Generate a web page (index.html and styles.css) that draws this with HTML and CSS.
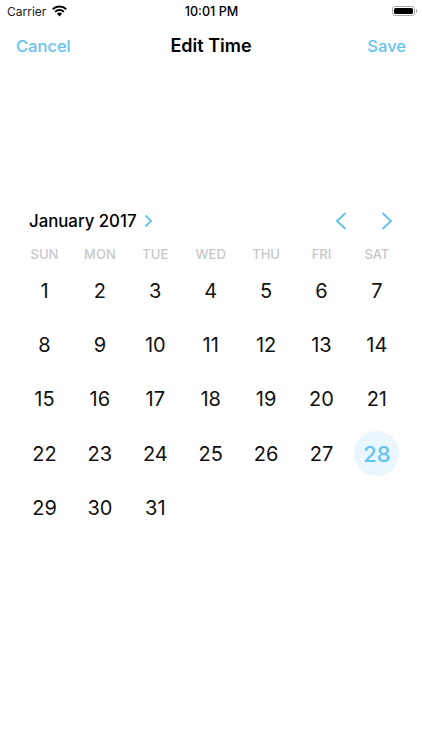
FILE: index.html
```html
<!DOCTYPE html>
<html lang="en">
<head>
  <meta charset="UTF-8">
  <meta name="viewport" content="width=device-width, initial-scale=1.0">
  <title>Edit Time</title>
  <link rel="stylesheet" href="styles.css">
</head>
<body>
  <div class="status-bar">
    <div class="status-left">
      <span>Carrier</span>
      <svg class="wifi" width="15" height="12" viewBox="0 0 16 12">
        <path d="M8 11.8 5.300 8.900a3.800 3.800 0 0 1 5.400 0z" fill="#000"/>
        <path d="M3.300 6.900a6.800 6.800 0 0 1 9.400 0" fill="none" stroke="#000" stroke-width="2.100"/>
        <path d="M.8 4.200a10.400 10.400 0 0 1 14.400 0" fill="none" stroke="#000" stroke-width="2.100"/>
      </svg>
    </div>
    <span class="status-time">10:01 PM</span>
    <div class="battery"><div class="battery-fill"></div></div>
  </div>

  <div class="nav">
    <span class="nav-btn">Cancel</span>
    <span class="nav-title">Edit Time</span>
    <span class="nav-btn nav-save">Save</span>
  </div>

  <div class="calendar">
    <div class="cal-head">
      <div class="cal-month">
        <span>January 2017</span>
        <svg width="9" height="14" viewBox="0 0 9 14"><path d="M1.5 1.5 7 7l-5.500 5.500" fill="none" stroke="#5ec2f2" stroke-width="1.800"/></svg>
      </div>
      <div class="cal-arrows">
        <svg width="12" height="18" viewBox="0 0 12 18"><path d="M10.500 1 2 9l8.500 8" fill="none" stroke="#5ec2f2" stroke-width="1.800"/></svg>
        <svg width="12" height="18" viewBox="0 0 12 18"><path d="M1.500 1 10 9l-8.500 8" fill="none" stroke="#5ec2f2" stroke-width="1.800"/></svg>
      </div>
    </div>

    <div class="weekdays">
      <span>SUN</span><span>MON</span><span>TUE</span><span>WED</span><span>THU</span><span>FRI</span><span>SAT</span>
    </div>

    <div class="days">
      <span>1</span><span>2</span><span>3</span><span>4</span><span>5</span><span>6</span><span>7</span>
      <span>8</span><span>9</span><span>10</span><span>11</span><span>12</span><span>13</span><span>14</span>
      <span>15</span><span>16</span><span>17</span><span>18</span><span>19</span><span>20</span><span>21</span>
      <span>22</span><span>23</span><span>24</span><span>25</span><span>26</span><span>27</span><span class="selected">28</span>
      <span>29</span><span>30</span><span>31</span>
    </div>
  </div>
</body>
</html>
```

FILE: styles.css
```css
* {
  box-sizing: border-box;
  margin: 0;
  padding: 0;
}

html, body {
  height: 100%;
  background: #fff;
  font-family: 'Inter', 'Liberation Sans', sans-serif;
  color: #000;
}

.status-bar {
  display: grid;
  grid-template-columns: 1fr auto 1fr;
  align-items: center;
  height: 22px;
  padding: 0 6px 0 7px;
  font-size: 12px;
}

.status-left {
  display: flex;
  align-items: center;
  gap: 6px;
  color: #222;
}

.status-time {
  font-size: 12.600px;
  font-weight: 500;
}

.battery {
  position: relative;
  justify-self: end;
  width: 23px;
  height: 10px;
  margin-right: 1px;
  padding: 1px;
  border: 1px solid #aaa;
  border-radius: 3px;
}

.battery::after {
  content: "";
  position: absolute;
  top: 2px;
  right: -3px;
  width: 1.500px;
  height: 4px;
  background: #aaa;
  border-radius: 0 1px 1px 0;
}

.battery-fill {
  height: 100%;
  background: #000;
  border-radius: 1.500px;
}

.nav {
  display: grid;
  grid-template-columns: 1fr auto 1fr;
  align-items: center;
  height: 47px;
  padding: 0 16px;
}

.nav-btn {
  font-size: 16.500px;
  font-weight: 500;
  color: #66c4f4;
}

.nav-save {
  justify-self: end;
}

.nav-title {
  font-size: 18px;
  font-weight: 600;
}

.calendar {
  margin-top: 138px;
}

.cal-head {
  display: flex;
  justify-content: space-between;
  align-items: center;
  height: 28px;
  padding: 0 29px;
}

.cal-month {
  display: flex;
  align-items: center;
  gap: 7px;
  font-size: 16.800px;
  font-weight: 500;
}

.cal-arrows {
  display: flex;
  gap: 34px;
}

.weekdays, .days {
  display: grid;
  grid-template-columns: repeat(7, 45px);
  column-gap: 10.400px;
  padding: 0 22px;
  justify-items: center;
}

.weekdays {
  margin-top: 11px;
  font-size: 13px;
  font-weight: 500;
  color: #c8c8ca;
  height: 16px;
  align-items: center;
}

.days {
  margin-top: 6px;
  row-gap: 9.400px;
  font-size: 20px;
  color: #111;
}

.days span {
  width: 45px;
  height: 45px;
  display: flex;
  align-items: center;
  justify-content: center;
}

.days .selected {
  background: #e9f6fe;
  border-radius: 50%;
  color: #66c4f4;
  font-size: 22px;
  font-weight: 500;
}
```
